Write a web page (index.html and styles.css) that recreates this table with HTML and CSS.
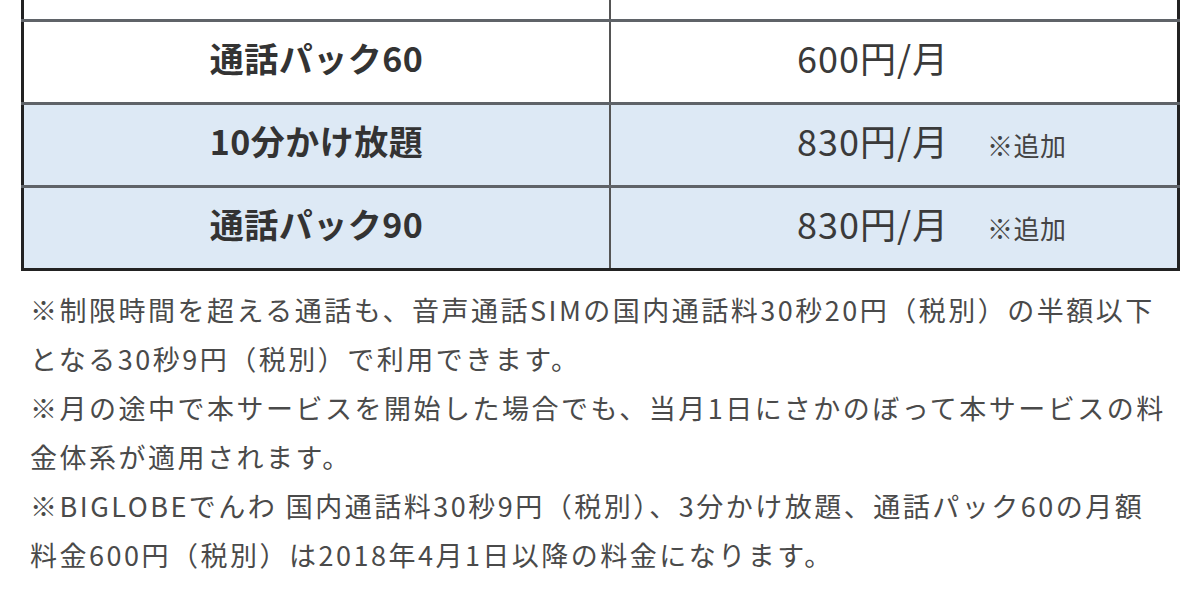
FILE: index.html
```html
<!DOCTYPE html>
<html lang="ja">
<head>
<meta charset="utf-8">
<link rel="stylesheet" href="styles.css">
</head>
<body>
<div class="page">
  <table class="plan">
    <tr class="cut">
      <td class="name"></td>
      <td class="price"></td>
    </tr>
    <tr>
      <td class="name">通話パック60</td>
      <td class="price">600円/月</td>
    </tr>
    <tr class="blue">
      <td class="name">10分かけ放題</td>
      <td class="price">830円/月<span class="add">※追加</span></td>
    </tr>
    <tr class="blue">
      <td class="name">通話パック90</td>
      <td class="price">830円/月<span class="add">※追加</span></td>
    </tr>
  </table>
  <div class="notes">
    <p>※制限時間を超える通話も、音声通話SIMの国内通話料30秒20円（税別）の半額以下<br>となる30秒9円（税別）で利用できます。</p>
    <p>※月の途中で本サービスを開始した場合でも、当月1日にさかのぼって本サービスの料<br>金体系が適用されます。</p>
    <p>※BIGLOBEでんわ 国内通話料30秒9円（税別）、3分かけ放題、通話パック60の月額<br>料金600円（税別）は2018年4月1日以降の料金になります。</p>
  </div>
</div>
</body>
</html>
```
FILE: styles.css
```css
html, body {
  margin: 0;
  padding: 0;
  background: #ffffff;
}
.page {
  padding-left: 21px;
  font-family: "Noto Sans CJK JP", "Noto Sans", sans-serif;
}
.plan {
  width: 1159px;
  border-collapse: collapse;
  border-left: 3px solid #222;
  border-right: 3px solid #222;
  border-bottom: 3px solid #222;
  color: #333;
}
.plan td {
  border-top: 3px solid #5f6368;
  border-left: 2px solid #555;
  height: 70px;
  padding: 0 0 10px 0;
  vertical-align: middle;
}
.plan tr.cut td {
  border-top: none;
  height: 19px;
  padding: 0;
}
.plan td.name {
  width: 585px;
  text-align: center;
  font-weight: bold;
  font-size: 34px;
  letter-spacing: 0.5px;
  border-left: none;
}
.plan td.price {
  text-align: left;
  padding-left: 186px;
  font-size: 36px;
  letter-spacing: 1px;
  color: #3a3a3a;
}
.plan tr.blue td {
  background: #dde9f5;
}
.add {
  font-size: 26px;
  margin-left: 38px;
  letter-spacing: 0.5px;
  color: #444;
}
.notes {
  margin-top: 14px;
  padding-left: 9px;
  color: #4a4a4a;
  font-size: 27px;
  letter-spacing: 2.5px;
}
.notes p {
  margin: 0;
  line-height: 49px;
  white-space: nowrap;
}
```
